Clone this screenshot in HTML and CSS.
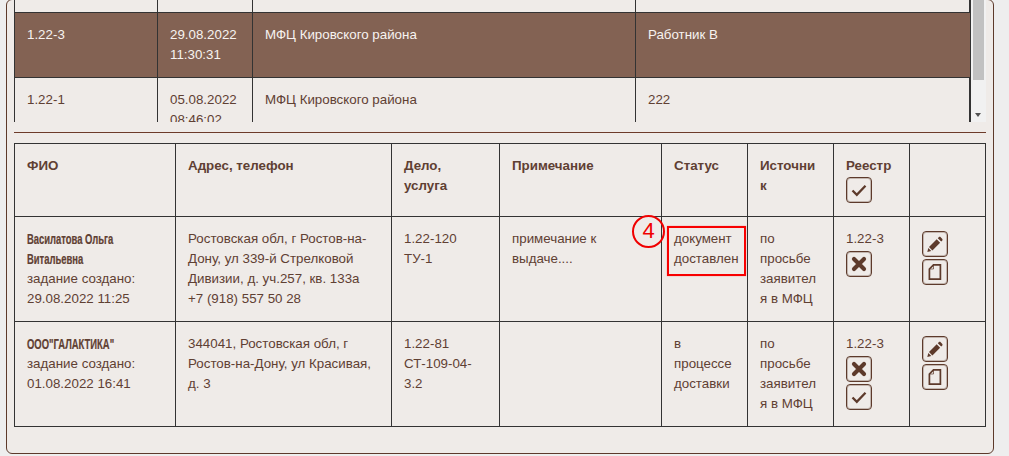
FILE: index.html
```html
<!DOCTYPE html>
<html lang="ru">
<head>
<meta charset="utf-8">
<title>Реестр</title>
<link rel="stylesheet" href="styles.css">
</head>
<body>
<svg class="defs" width="0" height="0" aria-hidden="true">
  <symbol id="i-check" viewBox="0 0 24 24"><path d="M5.500 12.500l4.300 4.300 8.700-9" fill="none" stroke="currentColor" stroke-width="2.300"/></symbol>
  <symbol id="i-x" viewBox="0 0 24 24"><path d="M7 7l10 10M17 7l-10 10" fill="none" stroke="currentColor" stroke-width="4.200" stroke-linecap="round"/></symbol>
  <symbol id="i-pencil" viewBox="0 0 24 24"><path d="M13.700 7.300l3.400 3.400-7.700 7.700-3.400-3.400zM14.800 6.200l.9-.9c.6-.6 1.400-.6 2 0l1.400 1.400c.6.6.6 1.400 0 2l-.9.9zM5.300 16l3 3-4 1z" fill="currentColor"/></symbol>
  <symbol id="i-copy" viewBox="0 0 24 24"><path d="M10.500 4.800h6.900v14.400h-11v-10.200z" fill="none" stroke="currentColor" stroke-width="1.700"/><path d="M10.500 5v4h-3.800" fill="none" stroke="currentColor" stroke-width=".7"/></symbol>
</svg>
<main class="panel">
  <div class="scrollbox">
    <div class="scroll-content">
      <table class="grid top-grid">
        <colgroup><col class="t1"><col class="t2"><col class="t3"><col class="t4"></colgroup>
        <tbody>
          <tr class="stub"><td></td><td></td><td></td><td></td></tr>
          <tr class="selected">
            <td>1.22-3</td><td>29.08.2022<br>11:30:31</td><td>МФЦ Кировского района</td><td>Работник В</td>
          </tr>
          <tr>
            <td>1.22-1</td><td>05.08.2022<br>08:46:02</td><td>МФЦ Кировского района</td><td>222</td>
          </tr>
        </tbody>
      </table>
    </div>
    <div class="scrollbar">
      <div class="thumb"></div>
      <div class="arrow"></div>
    </div>
  </div>
  <hr class="rule">
  <table class="grid main-grid">
    <colgroup><col class="c1"><col class="c2"><col class="c3"><col class="c4"><col class="c5"><col class="c6"><col class="c7"><col class="c8"></colgroup>
    <thead>
      <tr>
        <th>ФИО</th><th>Адрес, телефон</th><th>Дело,<br>услуга</th><th>Примечание</th><th>Статус</th><th>Источни<br>к</th>
        <th>Реестр
          <div class="btns head-btns"><button class="btn" type="button"><svg class="ico"><use href="#i-check"/></svg></button></div>
        </th>
        <th></th>
      </tr>
    </thead>
    <tbody>
      <tr>
        <td><span class="name">Василатова Ольга</span><br><span class="name">Витальевна</span><br>задание создано:<br>29.08.2022 11:25</td>
        <td>Ростовская обл, г Ростов-на-<br>Дону, ул 339-й Стрелковой<br>Дивизии, д. уч.257, кв. 133а<br>+7 (918) 557 50 28</td>
        <td>1.22-120<br>ТУ-1</td>
        <td>примечание к<br>выдаче....</td>
        <td class="status-cell">документ<br>доставлен
          <span class="mark-box"></span>
          <span class="mark-num">4</span>
        </td>
        <td>по<br>просьбе<br>заявител<br>я в МФЦ</td>
        <td>1.22-3
          <div class="btns"><button class="btn" type="button"><svg class="ico"><use href="#i-x"/></svg></button></div>
        </td>
        <td>
          <div class="btns"><button class="btn" type="button"><svg class="ico"><use href="#i-pencil"/></svg></button><button class="btn" type="button"><svg class="ico"><use href="#i-copy"/></svg></button></div>
        </td>
      </tr>
      <tr>
        <td><span class="name">ООО"ГАЛАКТИКА"</span><br>задание создано:<br>01.08.2022 16:41</td>
        <td>344041, Ростовская обл, г<br>Ростов-на-Дону, ул Красивая,<br>д. 3</td>
        <td>1.22-81<br>СТ-109-04-<br>3.2</td>
        <td></td>
        <td>в<br>процессе<br>доставки</td>
        <td>по<br>просьбе<br>заявител<br>я в МФЦ</td>
        <td>1.22-3
          <div class="btns"><button class="btn" type="button"><svg class="ico"><use href="#i-x"/></svg></button><button class="btn" type="button"><svg class="ico"><use href="#i-check"/></svg></button></div>
        </td>
        <td>
          <div class="btns"><button class="btn" type="button"><svg class="ico"><use href="#i-pencil"/></svg></button><button class="btn" type="button"><svg class="ico"><use href="#i-copy"/></svg></button></div>
        </td>
      </tr>
    </tbody>
  </table>
</main>
</body>
</html>
```

FILE: styles.css
```css
* { box-sizing: border-box; }
html, body { margin: 0; height: 456px; overflow: hidden; background: #eeeeee; }
body {
  font-family: "Liberation Sans", Arial, sans-serif;
  font-size: 13.33px;
  line-height: 20px;
  color: #5f4033;
}
.defs { position: absolute; }
.panel {
  width: 988px;
  height: 455px;
  margin: -1px 0 0 6px;
  padding: 0 7px;
  background: #efebe8;
  border: 1px solid #5d3a2b;
  border-radius: 6px;
}
.scrollbox { display: flex; height: 122px; overflow: hidden; }
.scroll-content { width: 957px; flex: none; border-right: 2px solid #333333; }
.scrollbar { position: relative; width: 15px; flex: none; background: #f1f1f1; }
.thumb { width: 11px; height: 80px; margin-left: 2px; background: #c1c1c1; }
.arrow {
  position: absolute;
  left: 4px;
  bottom: 5px;
  border-style: solid;
  border-width: 4px 3.5px 0;
  border-color: #505050 transparent transparent;
}
.grid { border-collapse: collapse; table-layout: fixed; }
.grid td, .grid th {
  border: 1px solid #333333;
  padding: 12px;
  text-align: left;
  vertical-align: top;
  font-weight: 400;
}
.grid th { font-weight: 700; }
.top-grid { width: 955px; }
.top-grid td:last-child { border-right: 0; }
.t1 { width: 143px; }
.t2 { width: 95px; }
.t3 { width: 383px; }
.t4 { width: 334px; }
.grid .stub td { height: 12px; padding: 0; border-top: 0; }
.selected td { background: #836253; color: #f7f3f0; }
.rule { height: 1px; margin: 10px 0; border: 0; background: #6d3b2a; }
.main-grid { width: 972px; }
.c1 { width: 161px; }
.c2 { width: 216px; }
.c3 { width: 108px; }
.c4 { width: 162px; }
.c5, .c6 { width: 86px; }
.c7, .c8 { width: 76px; }
.main-grid thead tr { height: 73px; }
.main-grid tbody tr { height: 105px; }
.name {
  display: inline-block;
  vertical-align: top;
  font-size: 14.5px;
  font-weight: 700;
  -webkit-text-stroke: 0.2px #5f4033;
  transform: scaleX(0.65);
  transform-origin: left center;
}
.btns { display: flex; flex-direction: column; align-items: flex-start; gap: 2px; margin-top: 2px; }
.head-btns { margin-top: 1px; }
.btn {
  display: block;
  width: 26px;
  height: 26px;
  padding: 0;
  border: 1px solid #5d3a2b;
  border-radius: 4px;
  background: transparent;
  box-shadow: inset 0 0 0 1px rgba(93, 58, 43, 0.3);
  color: #5d3a2b;
}
.ico { display: block; width: 24px; height: 24px; }
.status-cell { position: relative; }
.mark-box {
  position: absolute;
  left: 5px;
  top: 9px;
  width: 79px;
  height: 50px;
  border: 2px solid #f80000;
  box-shadow: 0 0 1px rgba(255, 0, 0, 0.5);
}
.mark-num {
  position: absolute;
  left: -30px;
  top: -2px;
  width: 33px;
  height: 33px;
  border: 2px solid #f00000;
  border-radius: 50%;
  color: #f00000;
  font-size: 22px;
  line-height: 28px;
  text-align: center;
}
```
